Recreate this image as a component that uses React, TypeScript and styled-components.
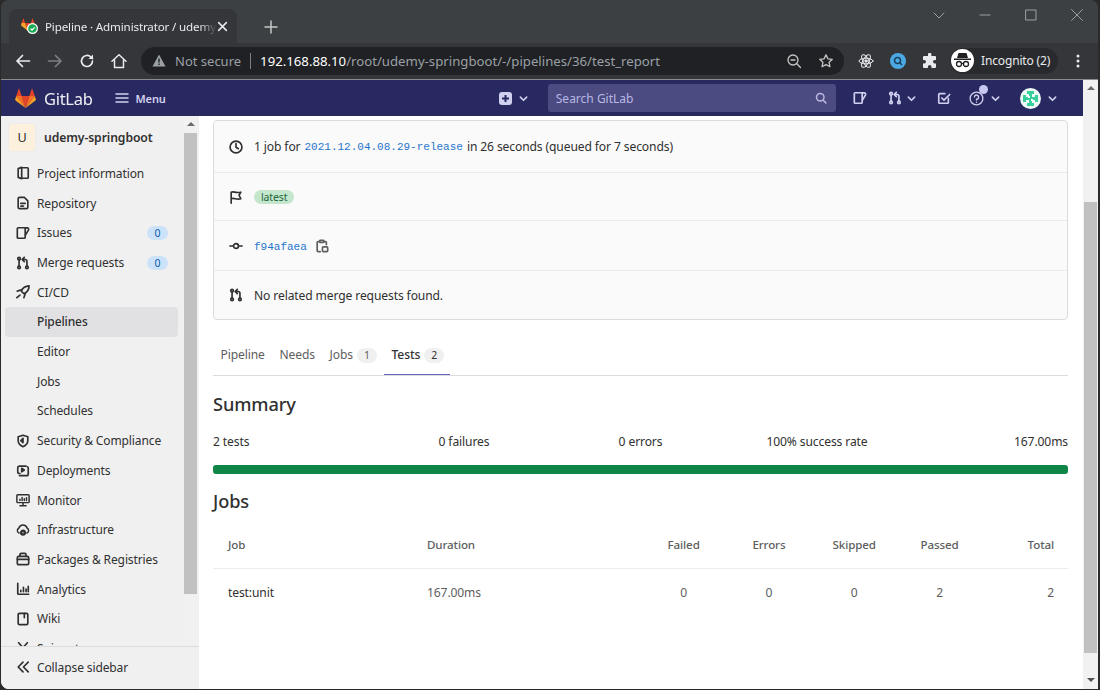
import React from 'react';
import styled, { createGlobalStyle } from 'styled-components';

const GlobalStyle = createGlobalStyle`
  html, body {
    margin: 0;
    padding: 0;
    height: 100%;
    overflow: hidden;
    background: #2a2a2a;
  }
  * {
    box-sizing: border-box;
  }
`;

const FONT = `"Noto Sans", "Liberation Sans", sans-serif`;

const Window = styled.div`
  width: 1097px;
  height: 689px;
  margin-left: 1px;
  display: flex;
  flex-direction: column;
  overflow: hidden;
  border-radius: 8px 8px 0 8px;
  background: #3c4043;
  font-family: ${FONT};
  font-size: 12px;
  color: #303030;
`;

/* browser chrome */
const TabStrip = styled.div`
  height: 43px;
  flex: none;
  display: flex;
  align-items: flex-end;
  padding-left: 8px;
  background: #3c4043;
`;

const Tab = styled.div`
  width: 228px;
  height: 34px;
  display: flex;
  align-items: center;
  padding: 0 8px 0 12px;
  border-radius: 8px 8px 0 0;
  background: #35363a;
  color: #e8eaed;
  font-size: 11.6px;
  letter-spacing: -0.15px;
`;

const TabTitle = styled.span`
  margin-left: 6px;
  width: 172px;
  white-space: nowrap;
  overflow: hidden;
  -webkit-mask-image: linear-gradient(to right, #000 90%, transparent);
  mask-image: linear-gradient(to right, #000 90%, transparent);
`;

const NewTab = styled.div`
  margin: 0 0 9px 27px;
  color: #c4c7c5;
  display: flex;
`;

const WindowControls = styled.div`
  margin-left: auto;
  height: 100%;
  padding: 8px 14px 0 0;
  display: flex;
  align-items: flex-start;
  gap: 32px;
  color: #9aa0a6;
`;

const Toolbar = styled.div`
  height: 37px;
  flex: none;
  display: flex;
  align-items: center;
  padding: 0 13px 1px 14px;
  background: #35363a;
  border-bottom: 1px solid #8a8b8d;
  color: #e8eaed;
`;

const ToolButton = styled.div<{ $dim?: boolean; $gap?: number }>`
  width: 16px;
  height: 16px;
  margin-left: ${(p) => p.$gap ?? 16}px;
  flex: none;
  display: flex;
  align-items: center;
  justify-content: center;
  color: ${(p) => (p.$dim ? '#7d7f82' : '#e8eaed')};
  &:first-child {
    margin-left: 0;
  }
`;

const Omnibox = styled.div`
  width: 703px;
  height: 28px;
  margin-left: 14px;
  flex: none;
  display: flex;
  align-items: center;
  padding: 0 10px 0 11px;
  border-radius: 14px;
  background: #202124;
  color: #9aa0a6;
  font-size: 13.2px;
  white-space: nowrap;
`;

const NotSecure = styled.span`
  margin-left: 9px;
  padding-right: 9px;
  border-right: 1px solid #7d7f82;
  line-height: 16px;
  font-size: 13px;
`;

const Url = styled.span`
  margin-left: 9px;
  b {
    font-weight: 400;
    color: #fff;
  }
`;

const OmniRight = styled.div`
  margin-left: auto;
  display: flex;
  gap: 16px;
  color: #c4c7c5;
`;

const Profile = styled.div`
  width: 108px;
  height: 26px;
  margin-left: 12px;
  flex: none;
  display: flex;
  align-items: center;
  padding-left: 1px;
  border-radius: 13px;
  background: #292a2d;
  color: #e8eaed;
  font-size: 12px;
  letter-spacing: -0.15px;
`;

const ProfileAvatar = styled.div`
  width: 23px;
  height: 23px;
  margin-right: 7px;
  border-radius: 50%;
  background: #fff;
  color: #202124;
  display: flex;
  align-items: center;
  justify-content: center;
`;

/* page */
const Viewport = styled.div`
  flex: 1;
  min-height: 0;
  display: flex;
  background: #fff;
`;

const Page = styled.div`
  flex: 1;
  min-width: 0;
  display: flex;
  flex-direction: column;
`;

const Scrollbar = styled.div<{ $width: number; $thumbTop: number; $thumbHeight: number }>`
  width: ${(p) => p.$width}px;
  flex: none;
  position: relative;
  background: #f1f1f1;
  &::before {
    content: '';
    position: absolute;
    left: 1px;
    right: 1px;
    top: ${(p) => p.$thumbTop}px;
    height: ${(p) => p.$thumbHeight}px;
    background: #c1c1c1;
  }
`;

const ArrowUp = styled.i`
  position: absolute;
  top: 6px;
  left: 50%;
  margin-left: -4px;
  border: 4px solid transparent;
  border-top: 0;
  border-bottom: 4px solid #6a6a6a;
`;

const ArrowDown = styled.i`
  position: absolute;
  bottom: 7px;
  left: 50%;
  margin-left: -4px;
  border: 4px solid transparent;
  border-bottom: 0;
  border-top: 4px solid #505050;
`;

const Navbar = styled.div`
  height: 36px;
  flex: none;
  display: flex;
  align-items: center;
  padding-left: 14px;
  background: #292961;
  color: #d1d0f0;
`;

const Brand = styled.span`
  margin-left: 8px;
  font-size: 16.5px;
  letter-spacing: -0.3px;
  color: #fff;
  opacity: 0.92;
`;

const MenuLabel = styled.span`
  margin-left: 6px;
  font-size: 11px;
  font-weight: 600;
  letter-spacing: -0.1px;
`;

const NavItem = styled.div<{ $at: number }>`
  margin-left: ${(p) => p.$at}px;
  display: flex;
  align-items: center;
  position: relative;
  flex: none;
`;

const SearchBox = styled.div`
  width: 288px;
  height: 28px;
  margin-left: 20px;
  flex: none;
  display: flex;
  align-items: center;
  justify-content: space-between;
  padding: 0 9px 0 8px;
  border-radius: 3px;
  background: #4b4b82;
  color: #b9b8e2;
  font-size: 12px;
`;

const HelpDot = styled.i`
  position: absolute;
  top: -6px;
  left: 10px;
  width: 9px;
  height: 9px;
  border-radius: 50%;
  background: #c8c7ef;
`;

const Layout = styled.div`
  flex: 1;
  min-height: 0;
  display: flex;
`;

const Sidebar = styled.aside`
  width: 198px;
  flex: none;
  display: flex;
  flex-direction: column;
  background: #f0f0f0;
`;

const SidebarBody = styled.div`
  flex: 1;
  min-height: 0;
  display: flex;
  padding-right: 1px;
`;

const SidebarScroll = styled.div`
  flex: 1;
  min-width: 0;
  overflow: hidden;
  padding: 7px 5px 0 4px;
`;

const ProjectHeader = styled.div`
  height: 29px;
  margin-bottom: 6.6px;
  display: flex;
  align-items: center;
  font-weight: 600;
  font-size: 12.2px;
  padding-left: 3px;
  letter-spacing: -0.1px;
`;

const ProjectAvatar = styled.div`
  width: 28px;
  height: 29px;
  margin-right: 8px;
  display: flex;
  align-items: center;
  justify-content: center;
  border: 1px solid #ececec;
  border-radius: 4px;
  background: #fdf1dd;
  font-weight: 400;
  font-size: 12.6px;
`;

const NavRow = styled.div<{ $active?: boolean }>`
  height: 29.7px;
  display: flex;
  align-items: center;
  padding-left: 11px;
  border-radius: 4px;
  background: ${(p) => (p.$active ? '#e1e1e4' : 'transparent')};
  font-weight: ${(p) => (p.$active ? 500 : 400)};
  white-space: nowrap;
  letter-spacing: -0.11px;
`;

const RowIcon = styled.span`
  width: 14px;
  height: 14px;
  margin-right: 7px;
  flex: none;
  display: flex;
  color: #303030;
`;

const SubLabel = styled.span`
  margin-left: 21px;
`;

const CountBadge = styled.span`
  width: 21px;
  height: 14px;
  margin-left: auto;
  margin-right: 10px;
  border-radius: 7px;
  background: #cbe2f9;
  color: #0b5cad;
  font-size: 10.5px;
  line-height: 14px;
  text-align: center;
`;

const CollapseBar = styled.div`
  height: 43px;
  flex: none;
  display: flex;
  align-items: center;
  padding: 0 0 2px 15px;
  border-top: 1px solid #dcdcde;
  letter-spacing: -0.11px;
`;

const Main = styled.main`
  flex: 1;
  min-width: 0;
  overflow: hidden;
  padding: 4px 15px 0 14px;
  font-size: 12.1px;
  letter-spacing: -0.12px;
`;

const InfoCard = styled.section`
  border: 1px solid #dbdbdb;
  border-radius: 4px;
  background: #fafafa;
`;

const InfoRow = styled.div<{ $h: number }>`
  height: ${(p) => p.$h}px;
  display: flex;
  align-items: center;
  padding-left: 15px;
  & + & {
    border-top: 1px solid #ececef;
  }
`;

const InfoIcon = styled.span`
  width: 14px;
  height: 14px;
  margin-right: 11px;
  display: flex;
  flex: none;
  color: #303030;
`;

const MonoLink = styled.span<{ $flush?: boolean }>`
  margin: ${(p) => (p.$flush ? 2 : 0)}px 4px 0 ${(p) => (p.$flush ? 0 : 4)}px;
  font-family: "Liberation Mono", monospace;
  font-size: 11px;
  letter-spacing: 0;
  color: #1f75cb;
`;

const Pill = styled.span`
  height: 14px;
  padding: 0 7px;
  border-radius: 7px;
  background: #c3e6cd;
  color: #24663b;
  font-size: 10.5px;
  line-height: 14px;
`;

const CopyIcon = styled.span`
  width: 14px;
  height: 14px;
  margin-left: 4px;
  display: flex;
  color: #5e5e5e;
`;

const Tabs = styled.div`
  height: 56px;
  display: flex;
  align-items: stretch;
  border-bottom: 1px solid #dbdbdb;
`;

const TabItem = styled.div<{ $active?: boolean; $w: number }>`
  width: ${(p) => p.$w}px;
  padding: 26px 0 0 7.5px;
  white-space: nowrap;
  color: ${(p) => (p.$active ? '#303030' : '#5e5e5e')};
  font-weight: ${(p) => (p.$active ? 500 : 400)};
  box-shadow: ${(p) => (p.$active ? 'inset 0 -1px 0 #6666c4' : 'none')};
`;

const TabCount = styled.span`
  display: inline-block;
  width: 20px;
  height: 15px;
  margin-left: 4px;
  border-radius: 8px;
  background: #f0f0f0;
  font-size: 10.5px;
  font-weight: 400;
  line-height: 15px;
  text-align: center;
  vertical-align: 0;
`;

const Heading = styled.h3`
  margin: 0;
  font-size: 18.2px;
  line-height: 26px;
  font-weight: 500;
  letter-spacing: -0.1px;
`;

const SummaryHeading = styled(Heading)`
  margin-top: 15px;
`;

const SummaryRow = styled.div`
  display: grid;
  grid-template-columns: 163px 176px 177px 176px 1fr;
  margin-top: 16px;
  line-height: 18px;
  span {
    text-align: center;
  }
  span:first-child {
    text-align: left;
  }
  span:last-child {
    text-align: right;
  }
`;

const ProgressBar = styled.div`
  height: 9px;
  margin-top: 14px;
  border-radius: 3px;
  background: #108548;
`;

const JobsHeading = styled(Heading)`
  margin-top: 14px;
`;

const columns = '199px 214px 85.3px 85.3px 85.3px 85.3px 1fr';

const TableHead = styled.div`
  display: grid;
  grid-template-columns: ${columns};
  height: 49px;
  margin-top: 6px;
  padding: 16px 14px 0 15px;
  border-bottom: 1px solid #ececef;
  color: #5e5e5e;
  font-weight: 500;
  font-size: 11.6px;
`;

const TableRow = styled.div`
  display: grid;
  grid-template-columns: ${columns};
  padding: 15px 14px 0 15px;
  color: #5e5e5e;
`;

const Cell = styled.span<{ $align?: string; $dark?: boolean }>`
  text-align: ${(p) => p.$align ?? 'left'};
  color: ${(p) => (p.$dark ? '#303030' : 'inherit')};
  line-height: 18px;
`;

const ChevronWrap = styled.span<{ $ml: number }>`
  margin-left: ${(p) => p.$ml}px;
  display: flex;
`;

/* drawings */
const Svg: React.FC<{ size?: number; box?: number; sw?: number; children: React.ReactNode }> = ({
  size = 14,
  box = 16,
  sw = 1.9,
  children,
}) => (
  <svg
    width={size}
    height={size}
    viewBox={`0 0 ${box} ${box}`}
    fill='none'
    stroke='currentColor'
    strokeWidth={sw}
    strokeLinecap='round'
    strokeLinejoin='round'>
    {children}
  </svg>
);

const Tanuki: React.FC<{ size: number }> = ({ size }) => (
  <svg width={size} height={size} viewBox='0 0 24 24'>
    <polygon points='12,22.8 16.4,9 7.6,9' fill='#e24329' />
    <polygon points='12,22.8 7.6,9 1.4,9' fill='#fc6d26' />
    <polygon points='12,22.8 16.4,9 22.6,9' fill='#fc6d26' />
    <polygon points='1.4,9 0.2,13.2 1,14.6 12,22.8' fill='#fca326' />
    <polygon points='22.6,9 23.8,13.2 23,14.6 12,22.8' fill='#fca326' />
    <polygon points='1.4,9 7.6,9 4.8,0.8 4.2,0.8' fill='#e24329' />
    <polygon points='22.6,9 16.4,9 19.2,0.8 19.8,0.8' fill='#e24329' />
  </svg>
);

const Favicon = () => (
  <svg width='18' height='18' viewBox='0 0 18 18'>
    <polygon points='7,14 10,6 4,6' fill='#e24329' />
    <polygon points='7,14 4,6 0.5,6 0,8.5' fill='#fca326' />
    <polygon points='7,14 10,6 13.5,6 14,8.5' fill='#fc6d26' />
    <polygon points='0.5,6 4,6 2.6,1' fill='#e24329' />
    <polygon points='13.5,6 10,6 11.4,1' fill='#e24329' />
    <circle cx='11.5' cy='11.5' r='5.5' fill='#fff' />
    <circle cx='11.5' cy='11.5' r='4.3' fill='#1aaa55' />
    <path d='M9.5 11.6l1.5 1.5 2.6-2.8' stroke='#fff' strokeWidth='1.2' fill='none' />
  </svg>
);

const Chevron: React.FC<{ ml?: number }> = ({ ml = 7 }) => (
  <ChevronWrap $ml={ml}>
    <Svg size={9} box={10} sw={1.8}>
      <path d='M1.5 3.5 5 7l3.5-3.5' />
    </Svg>
  </ChevronWrap>
);

const MrIcon = () => (
  <Svg>
    <circle cx='3.5' cy='3' r='1.5' />
    <circle cx='3.5' cy='13' r='1.5' />
    <circle cx='12.5' cy='13' r='1.5' />
    <path d='M3.5 4.5v7M12.5 11.5V6a2 2 0 0 0-2-2H7.5M9.5 1.5 7 4l2.5 2.5' />
  </Svg>
);

const IssuesIcon = () => (
  <Svg>
    <path d='M1.5 3a1 1 0 0 1 1-1h7a1 1 0 0 1 1 1v10a1 1 0 0 1-1 1h-7a1 1 0 0 1-1-1z' />
    <path d='M10.5 2.2H13a1.5 1.5 0 0 1 1.3 2.2l-3.5 6.1' />
  </Svg>
);

const BookIcon = () => (
  <Svg>
    <path d='M6.5 2H13a1 1 0 0 1 1 1v10a1 1 0 0 1-1 1H6.5' />
    <path d='M2.500 3 6.500 1.500v13l-4-1.500z' />
  </Svg>
);

const RepoIcon = () => (
  <Svg>
    <path d='M2.5 3A1.5 1.5 0 0 1 4 1.5h5.5l4 4V13a1.5 1.5 0 0 1-1.500 1.500H4A1.500 1.500 0 0 1 2.500 13z' />
    <path d='M5.500 8.500h5M5.500 11.500h3' />
  </Svg>
);

const RocketIcon = () => (
  <Svg>
    <path d='M15 1c-4.500.2-7.500 2.500-9 6l3 3c3.500-1.500 5.800-4.500 6-9z' />
    <path d='M6 5.500 1.500 7M10.500 10 9 14.500M4.500 11.500l-3.500 3' />
  </Svg>
);

const ShieldIcon = () => (
  <Svg>
    <path d='M8 1.500 2.500 3.200v4.300c0 3.400 2.300 5.700 5.500 7 3.200-1.300 5.500-3.600 5.500-7V3.200z' />
    <path d='M8 5v5L5.500 7.500z' fill='currentColor' />
  </Svg>
);

const DeployIcon = () => (
  <Svg>
    <path d='M4.500 12H4a2 2 0 0 1-2-2V5.500a2 2 0 0 1 2-2h7.500' />
    <path d='M4 14.500h8a2 2 0 0 0 2-2V6a2 2 0 0 0-1-1.700' />
    <path d='M6.500 6 9.500 8l-3 2z' fill='currentColor' />
  </Svg>
);

const MonitorIcon = () => (
  <Svg sw={1.7}>
    <rect x='1' y='2' width='14' height='9' rx='1' />
    <path d='M4.500 8.500V7M7 8.500V5M9.500 8.500V6.500M12 8.500V5.500M8 11v3M4.500 14.500h7' />
  </Svg>
);

const InfraIcon = () => (
  <Svg sw={1.7}>
    <path d='M3.500 11.500A3 3 0 0 1 3.200 6 5 5 0 0 1 12.800 6a3 3 0 0 1-.3 5.500' />
    <circle cx='8' cy='11' r='2.600' fill='currentColor' />
    <circle cx='8' cy='11' r='0.800' fill='#f0f0f0' stroke='none' />
  </Svg>
);

const PackageIcon = () => (
  <Svg>
    <rect x='1.500' y='5' width='13' height='9.500' rx='1.500' />
    <path d='M4.500 5V3A1.500 1.500 0 0 1 6 1.500h4A1.500 1.500 0 0 1 11.500 3v2M1.500 8.500h13' />
  </Svg>
);

const AnalyticsIcon = () => (
  <Svg>
    <path d='M2 1.500V13a1 1 0 0 0 1 1h11.500' />
    <path d='M5.500 11V9.500M8.500 11V6M11.500 11V8M14 11V5' />
  </Svg>
);

const WikiIcon = () => (
  <Svg>
    <rect x='2.500' y='1.500' width='11' height='13' rx='1.500' />
    <path d='M9.500 1.500v5' />
  </Svg>
);

const ScissorsIcon = () => (
  <Svg>
    <path d='M3 2l8 9M13 2 5 11' />
    <circle cx='4' cy='13' r='1.500' />
    <circle cx='12' cy='13' r='1.500' />
  </Svg>
);

const sidebarItems: { label: string; icon?: React.ReactNode; count?: number; active?: boolean }[] = [
  { label: 'Project information', icon: <BookIcon /> },
  { label: 'Repository', icon: <RepoIcon /> },
  { label: 'Issues', icon: <IssuesIcon />, count: 0 },
  { label: 'Merge requests', icon: <MrIcon />, count: 0 },
  { label: 'CI/CD', icon: <RocketIcon /> },
  { label: 'Pipelines', active: true },
  { label: 'Editor' },
  { label: 'Jobs' },
  { label: 'Schedules' },
  { label: 'Security & Compliance', icon: <ShieldIcon /> },
  { label: 'Deployments', icon: <DeployIcon /> },
  { label: 'Monitor', icon: <MonitorIcon /> },
  { label: 'Infrastructure', icon: <InfraIcon /> },
  { label: 'Packages & Registries', icon: <PackageIcon /> },
  { label: 'Analytics', icon: <AnalyticsIcon /> },
  { label: 'Wiki', icon: <WikiIcon /> },
  { label: 'Snippets', icon: <ScissorsIcon /> },
];

const App: React.FC = () => (
  <Window>
    <GlobalStyle />
    <TabStrip>
      <Tab>
        <Favicon />
        <TabTitle>Pipeline · Administrator / udemy-springboot</TabTitle>
        <Svg size={11} box={10} sw={1.4}>
          <path d='M1.500 1.500l7 7M8.500 1.500l-7 7' />
        </Svg>
      </Tab>
      <NewTab>
        <Svg size={14} box={14} sw={1.5}>
          <path d='M7 1v12M1 7h12' />
        </Svg>
      </NewTab>
      <WindowControls>
        <Svg size={14} box={14} sw={1}>
          <path d='M2 5l5 5 5-5' />
        </Svg>
        <Svg size={14} box={14} sw={1}>
          <path d='M2 7h10' />
        </Svg>
        <Svg size={14} box={14} sw={1}>
          <rect x='2' y='2' width='10' height='10' />
        </Svg>
        <Svg size={14} box={14} sw={1}>
          <path d='M1.500 1.500l11 11M12.500 1.500l-11 11' />
        </Svg>
      </WindowControls>
    </TabStrip>
    <Toolbar>
      <ToolButton>
        <Svg size={16} sw={1.7}>
          <path d='M14.500 8H2M7.500 2.500 2 8l5.500 5.500' />
        </Svg>
      </ToolButton>
      <ToolButton $dim>
        <Svg size={16} sw={1.7}>
          <path d='M1.500 8H14M8.500 2.500 14 8l-5.500 5.500' />
        </Svg>
      </ToolButton>
      <ToolButton>
        <Svg size={16} sw={1.7}>
          <path d='M13.500 8a5.500 5.500 0 1 1-1.600-3.900L13.500 5.500' />
          <path d='M14 1.500v4.500H9.500' fill='currentColor' stroke='none' />
        </Svg>
      </ToolButton>
      <ToolButton>
        <Svg size={16} sw={1.5}>
          <path d='M1 8.200 8 1.800l7 6.400M3.500 7v7.500h9V7' />
        </Svg>
      </ToolButton>
      <Omnibox>
        <svg width='14' height='13' viewBox='0 0 14 13'>
          <path d='M7 0.500 13.500 12.500H.5z' fill='#9aa0a6' />
          <rect x='6.300' y='4.500' width='1.400' height='4' fill='#202124' />
          <rect x='6.300' y='9.500' width='1.400' height='1.500' fill='#202124' />
        </svg>
        <NotSecure>Not secure</NotSecure>
        <Url>
          <b>192.168.88.10</b>/root/udemy-springboot/-/pipelines/36/test_report
        </Url>
        <OmniRight>
          <Svg size={16} sw={1.3}>
            <circle cx='7' cy='7' r='5' />
            <path d='M5 7h4M10.800 10.800 14.500 14.500' />
          </Svg>
          <Svg size={16} sw={1.3}>
            <path d='M8 1.800l1.900 4 4.400.5-3.200 3 .8 4.400L8 11.600l-3.900 2.100.8-4.400-3.200-3 4.400-.5z' />
          </Svg>
        </OmniRight>
      </Omnibox>
      <ToolButton $gap={14}>
        <Svg size={16} sw={1}>
          <ellipse cx='8' cy='8' rx='7' ry='2.800' />
          <ellipse cx='8' cy='8' rx='7' ry='2.800' transform='rotate(60 8 8)' />
          <ellipse cx='8' cy='8' rx='7' ry='2.800' transform='rotate(120 8 8)' />
          <circle cx='8' cy='8' r='1.200' fill='currentColor' />
        </Svg>
      </ToolButton>
      <ToolButton>
        <svg width='16' height='16' viewBox='0 0 16 16'>
          <circle cx='8' cy='8' r='8' fill='#4aa9e3' />
          <circle cx='7.500' cy='7.500' r='3' fill='none' stroke='#1c3f5e' strokeWidth='1.500' />
          <path d='M9.800 9.800 12 12' stroke='#1c3f5e' strokeWidth='1.500' />
        </svg>
      </ToolButton>
      <ToolButton>
        <svg width='16' height='16' viewBox='0 0 16 16'>
          <path
            d='M6 1.500a1.700 1.700 0 0 1 3.400 0V3H13a1 1 0 0 1 1 1v3h-1.200a1.800 1.800 0 0 0 0 3.600H14V14a1 1 0 0 1-1 1H9.500v-1.200a1.800 1.800 0 0 0-3.600 0V15H2a1 1 0 0 1-1-1v-3.500h1.200a1.800 1.800 0 0 0 0-3.600H1V4a1 1 0 0 1 1-1h4z'
            fill='#e8eaed'
          />
        </svg>
      </ToolButton>
      <Profile>
        <ProfileAvatar>
          <svg width='19' height='17' viewBox='0 0 19 17'>
            <path d='M5.500 1h8l1.500 5H4z' fill='#202124' />
            <rect x='1' y='6.500' width='17' height='1.500' fill='#202124' />
            <circle cx='6' cy='12' r='2.500' fill='none' stroke='#202124' strokeWidth='1.300' />
            <circle cx='13' cy='12' r='2.500' fill='none' stroke='#202124' strokeWidth='1.300' />
            <path d='M8.500 11.500h2' stroke='#202124' strokeWidth='1.300' />
          </svg>
        </ProfileAvatar>
        Incognito (2)
      </Profile>
      <ToolButton $gap={12}>
        <svg width='4' height='16' viewBox='0 0 4 16'>
          <circle cx='2' cy='3' r='1.500' fill='#e8eaed' />
          <circle cx='2' cy='8' r='1.500' fill='#e8eaed' />
          <circle cx='2' cy='13' r='1.500' fill='#e8eaed' />
        </svg>
      </ToolButton>
    </Toolbar>
    <Viewport>
      <Page>
        <Navbar>
          <Tanuki size={21} />
          <Brand>GitLab</Brand>
          <NavItem $at={23}>
            <Svg size={14} box={14} sw={1.5}>
              <path d='M1 3h12M1 7h12M1 11h12' />
            </Svg>
            <MenuLabel>Menu</MenuLabel>
          </NavItem>
          <NavItem $at={333}>
            <svg width='13' height='13' viewBox='0 0 13 13'>
              <rect width='13' height='13' rx='3' fill='#d1d0f0' />
              <path d='M6.500 3v7M3 6.500h7' stroke='#292961' strokeWidth='2' />
            </svg>
            <Chevron />
          </NavItem>
          <SearchBox>
            Search GitLab
            <Svg size={12} sw={2}>
              <circle cx='7' cy='7' r='5' />
              <path d='M11 11l3.500 3.500' />
            </Svg>
          </SearchBox>
          <NavItem $at={17}>
            <IssuesIcon />
          </NavItem>
          <NavItem $at={21}>
            <MrIcon />
            <Chevron ml={5} />
          </NavItem>
          <NavItem $at={21}>
            <Svg>
              <path d='M13 8.500V13a1 1 0 0 1-1 1H3a1 1 0 0 1-1-1V4a1 1 0 0 1 1-1h6' />
              <path d='M5.500 8l2.500 2.500L14.500 4' />
            </Svg>
          </NavItem>
          <NavItem $at={18}>
            <Svg size={15} sw={1.4}>
              <circle cx='8' cy='8' r='6.800' />
              <path d='M5.800 6.200A2.200 2.200 0 1 1 8 8.700v1M8 11.800v.2' />
            </Svg>
            <HelpDot />
            <Chevron ml={7} />
          </NavItem>
          <NavItem $at={20}>
            <svg width='21' height='21' viewBox='0 0 21 21'>
              <clipPath id='avatar-clip'>
                <circle cx='10.500' cy='10.500' r='10.500' />
              </clipPath>
              <g clipPath='url(#avatar-clip)'>
                <rect width='21' height='21' fill='#eef9f5' />
                <path d='M7 3h7v3h-2v9h2v3H7v-3h2V6H7z' fill='#38cf9c' />
                <path d='M3 7h3v2h9V7h3v7h-3v-2H6v2H3z' fill='#38cf9c' />
                <rect x='8' y='8' width='2' height='2' fill='#fff' />
                <rect x='11' y='11' width='2' height='2' fill='#fff' />
              </g>
            </svg>
            <Chevron ml={7} />
          </NavItem>
        </Navbar>
        <Layout>
          <Sidebar>
            <SidebarBody>
              <SidebarScroll>
                <ProjectHeader>
                  <ProjectAvatar>U</ProjectAvatar>
                  udemy-springboot
                </ProjectHeader>
                {sidebarItems.map((item) => (
                  <NavRow key={item.label} $active={item.active}>
                    {item.icon ? <RowIcon>{item.icon}</RowIcon> : null}
                    {item.icon ? item.label : <SubLabel>{item.label}</SubLabel>}
                    {item.count !== undefined && <CountBadge>{item.count}</CountBadge>}
                  </NavRow>
                ))}
              </SidebarScroll>
              <Scrollbar $width={15} $thumbTop={17} $thumbHeight={461}>
                <ArrowUp />
              </Scrollbar>
            </SidebarBody>
            <CollapseBar>
              <RowIcon>
                <Svg>
                  <path d='M8 2.500 2.500 8 8 13.500M14 2.500 8.500 8l5.500 5.500' />
                </Svg>
              </RowIcon>
              Collapse sidebar
            </CollapseBar>
          </Sidebar>
          <Main>
            <InfoCard>
              <InfoRow $h={51}>
                <InfoIcon>
                  <Svg>
                    <circle cx='8' cy='8' r='6.800' />
                    <path d='M8 4v4.300l2.700 1.700' />
                  </Svg>
                </InfoIcon>
                1 job for <MonoLink>2021.12.04.08.29-release</MonoLink> in 26 seconds (queued for 7 seconds)
              </InfoRow>
              <InfoRow $h={48}>
                <InfoIcon>
                  <Svg>
                    <path d='M2.500 15V2.500c3-1.500 4.500 1.500 11 0L11.500 6l2 4c-5 1.500-8-1.500-11 0' />
                  </Svg>
                </InfoIcon>
                <Pill>latest</Pill>
              </InfoRow>
              <InfoRow $h={50}>
                <InfoIcon>
                  <Svg>
                    <circle cx='8' cy='8' r='2.800' />
                    <path d='M1 8h4M11 8h4' />
                  </Svg>
                </InfoIcon>
                <MonoLink $flush>f94afaea</MonoLink>
                <CopyIcon>
                  <Svg>
                    <path d='M10.500 3H12a1 1 0 0 1 1 1v2.500M5 3H3.500a1 1 0 0 0-1 1v9.500a1 1 0 0 0 1 1H6' />
                    <rect x='5.500' y='1.500' width='4.500' height='2.500' rx='.5' />
                    <rect x='8.500' y='9' width='6' height='5.500' rx='1' />
                  </Svg>
                </CopyIcon>
              </InfoRow>
              <InfoRow $h={49}>
                <InfoIcon>
                  <MrIcon />
                </InfoIcon>
                No related merge requests found.
              </InfoRow>
            </InfoCard>
            <Tabs>
              <TabItem $w={59}>Pipeline</TabItem>
              <TabItem $w={50}>Needs</TabItem>
              <TabItem $w={62}>
                Jobs<TabCount>1</TabCount>
              </TabItem>
              <TabItem $w={66} $active>
                Tests<TabCount>2</TabCount>
              </TabItem>
            </Tabs>
            <SummaryHeading>Summary</SummaryHeading>
            <SummaryRow>
              <span>2 tests</span>
              <span>0 failures</span>
              <span>0 errors</span>
              <span>100% success rate</span>
              <span>167.00ms</span>
            </SummaryRow>
            <ProgressBar />
            <JobsHeading>Jobs</JobsHeading>
            <TableHead>
              <Cell>Job</Cell>
              <Cell>Duration</Cell>
              <Cell $align='center'>Failed</Cell>
              <Cell $align='center'>Errors</Cell>
              <Cell $align='center'>Skipped</Cell>
              <Cell $align='center'>Passed</Cell>
              <Cell $align='right'>Total</Cell>
            </TableHead>
            <TableRow>
              <Cell $dark>test:unit</Cell>
              <Cell>167.00ms</Cell>
              <Cell $align='center'>0</Cell>
              <Cell $align='center'>0</Cell>
              <Cell $align='center'>0</Cell>
              <Cell $align='center'>2</Cell>
              <Cell $align='right'>2</Cell>
            </TableRow>
          </Main>
        </Layout>
      </Page>
      <Scrollbar $width={15} $thumbTop={122} $thumbHeight={451}>
        <ArrowUp />
        <ArrowDown />
      </Scrollbar>
    </Viewport>
  </Window>
);

export default App;
